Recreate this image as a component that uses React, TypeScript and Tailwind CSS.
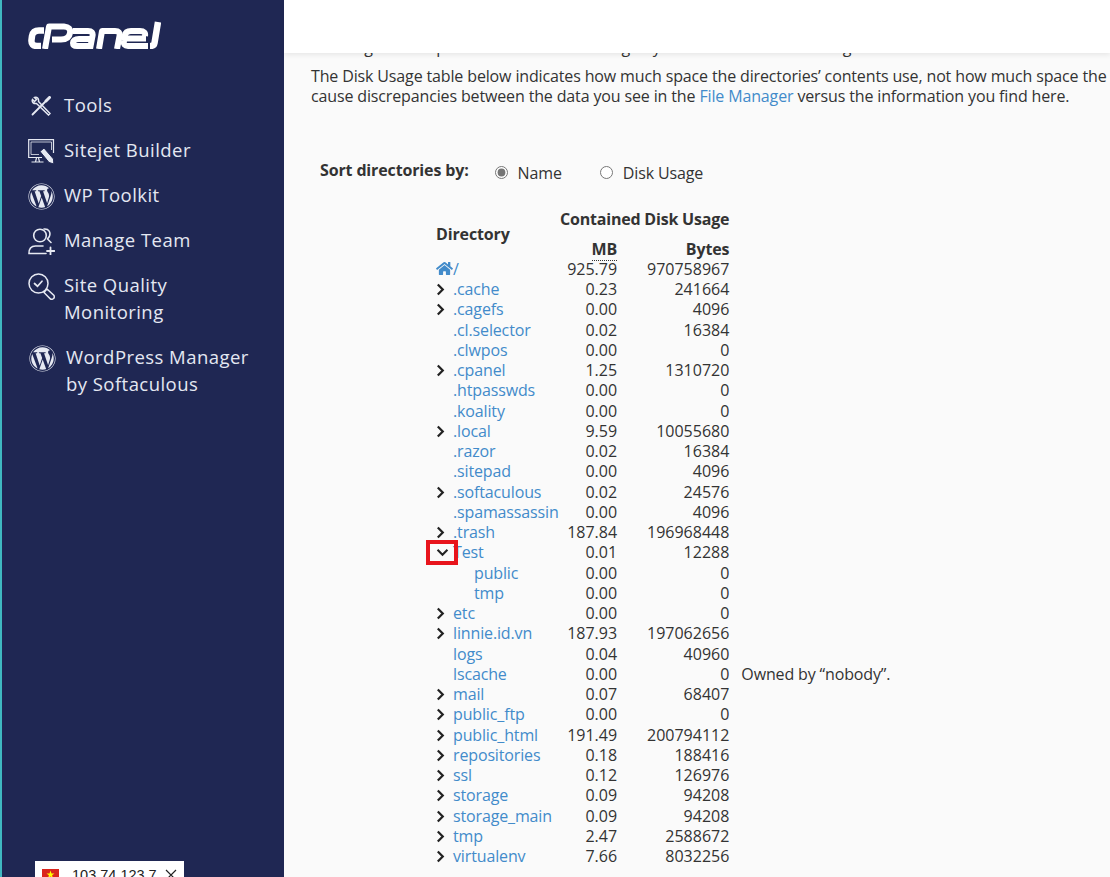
import { useState } from "react";
import { FaHome, FaWordpress } from "react-icons/fa";

const rows = [
  { name: ".cache", mb: "0.23", bytes: "241664", arrow: true },
  { name: ".cagefs", mb: "0.00", bytes: "4096", arrow: true },
  { name: ".cl.selector", mb: "0.02", bytes: "16384" },
  { name: ".clwpos", mb: "0.00", bytes: "0" },
  { name: ".cpanel", mb: "1.25", bytes: "1310720", arrow: true },
  { name: ".htpasswds", mb: "0.00", bytes: "0" },
  { name: ".koality", mb: "0.00", bytes: "0" },
  { name: ".local", mb: "9.59", bytes: "10055680", arrow: true },
  { name: ".razor", mb: "0.02", bytes: "16384" },
  { name: ".sitepad", mb: "0.00", bytes: "4096" },
  { name: ".softaculous", mb: "0.02", bytes: "24576", arrow: true },
  { name: ".spamassassin", mb: "0.00", bytes: "4096" },
  { name: ".trash", mb: "187.84", bytes: "196968448", arrow: true },
  { name: "Test", mb: "0.01", bytes: "12288", open: true },
  { name: "public", mb: "0.00", bytes: "0", child: true },
  { name: "tmp", mb: "0.00", bytes: "0", child: true },
  { name: "etc", mb: "0.00", bytes: "0", arrow: true },
  { name: "linnie.id.vn", mb: "187.93", bytes: "197062656", arrow: true },
  { name: "logs", mb: "0.04", bytes: "40960" },
  { name: "lscache", mb: "0.00", bytes: "0", note: "Owned by “nobody”." },
  { name: "mail", mb: "0.07", bytes: "68407", arrow: true },
  { name: "public_ftp", mb: "0.00", bytes: "0", arrow: true },
  { name: "public_html", mb: "191.49", bytes: "200794112", arrow: true },
  { name: "repositories", mb: "0.18", bytes: "188416", arrow: true },
  { name: "ssl", mb: "0.12", bytes: "126976", arrow: true },
  { name: "storage", mb: "0.09", bytes: "94208", arrow: true },
  { name: "storage_main", mb: "0.09", bytes: "94208", arrow: true },
  { name: "tmp", mb: "2.47", bytes: "2588672", arrow: true },
  { name: "virtualenv", mb: "7.66", bytes: "8032256", arrow: true },
];

function NavItem({ icon, children, className }: { icon: React.ReactNode; children: React.ReactNode; className?: string }) {
  return (
    <li className={"flex " + (className ?? "")}>
      <div className="w-[36px] shrink-0">{icon}</div>
      <span className="text-[18.500px] leading-[27px] tracking-[0.45px] text-[#e4e8f2]">{children}</span>
    </li>
  );
}

export default function App() {
  const [sort, setSort] = useState("name");

  return (
    <div className="flex h-[877px] w-[1110px] overflow-hidden bg-[#fafafa] font-['Open_Sans',sans-serif] text-[16px] text-[#333]">
      <aside className="relative h-full w-[284px] shrink-0 border-l-2 border-[#3fb8c0] bg-[#1f2753]">
        <div className="pl-[26px] pt-[21px]">
          {/* logo */}
          <svg viewBox="0 0 133 28" className="block h-[28px] w-[133px]" fill="none" stroke="#fff" strokeLinejoin="round">
            <path d="M16 9.500H11Q5 9.500 4 15L3.500 19Q3 25 9 25H13" strokeWidth="6.500" />
            <path d="M17 28 21 5.500H36Q43 6 42 12 41 18.500 33 18.500H24" strokeWidth="6" />
            <path d="M45 10H60Q65.500 10 64.500 15L62 28M63 18H51Q45.500 18 45 22 45 25 49 25H62" strokeWidth="6" />
            <path d="M71 28 74 10H87Q92.500 10 91.500 15L89 28" strokeWidth="6" />
            <path d="M118 17.500H99M112 10H103Q97.500 10 96.500 15L96 20Q95 25 100 25H120M112 10Q118 10 117 15" strokeWidth="6" />
            <path d="M130 1 126.500 22Q126 25 122 25" strokeWidth="6.500" />
          </svg>
        </div>

        <ul className="mt-[42px] pl-[26px]">
          <NavItem
            className="h-[45px]"
            icon={
              <svg viewBox="0 0 20 20" className="ml-[3px] mt-[5px] h-[20px] w-[20px]" fill="none" stroke="#e6e9f2" strokeWidth="1.500" strokeLinecap="round">
                <path d="M1.500 3.500 3.500 5.500 5.500 3.500 3.500 1.500C6 .5 8 2.500 7.500 5.500L19 17.500 17.500 19 5.500 7.500C2.500 8 .5 6 1.500 3.500z" fill="#1f2753" />
                <path d="M14 6 1.500 18.500" strokeWidth="1.800" />
                <path d="M15 5 18.500 1.500" strokeWidth="3" />
              </svg>
            }
          >
            Tools
          </NavItem>
          <NavItem
            className="h-[45px]"
            icon={
              <svg viewBox="0 0 27 26" className="mt-[3px] h-[26px] w-[27px]" fill="none" stroke="#e6e9f2" strokeWidth="1.200">
                <path d="M14 18.500H.7V.7H25.500V14" />
                <path d="M3 3H23.500V11M3 3V15.500H11" strokeWidth=".8" />
                <path d="M8.500 19 7.500 23H3.500H15.500H11.500L10.500 19" />
                <path d="M16 9 25.500 20 25.800 25 21 23.500 12 12.500z" fill="#e6e9f2" stroke="#1f2753" strokeWidth="1" />
              </svg>
            }
          >
            Sitejet Builder
          </NavItem>
          <NavItem className="h-[45px]" icon={<FaWordpress className="mt-[2px] h-[27px] w-[27px] text-[#e6e9f2]" />}>
            WP Toolkit
          </NavItem>
          <NavItem
            className="h-[45px]"
            icon={
              <svg viewBox="0 0 27 27" className="mt-[2px] h-[27px] w-[27px]" fill="none" stroke="#e6e9f2" strokeWidth="1.600" strokeLinecap="round">
                <circle cx="12" cy="7.500" r="6.300" />
                <path d="M16 1c5-.5 7 3.500 5.300 7.500L19.500 11l3.500 3.500" />
                <path d="M15 18H7.500C3 18 .8 21 1 25.500H18" />
                <path d="M22.500 19.500v7M19 23h7.500" strokeWidth="1.800" />
              </svg>
            }
          >
            Manage Team
          </NavItem>
          <NavItem
            className="h-[72px]"
            icon={
              <svg viewBox="0 0 27 27" className="mt-[2px] h-[27px] w-[27px]" fill="none" stroke="#e6e9f2" strokeWidth="1.500" strokeLinecap="round">
                <circle cx="10.500" cy="10.500" r="9.500" />
                <path d="M6.500 10.500 9.500 13.200 14 8.200" strokeWidth="1.700" />
                <path d="M17.500 17.500 19 16 26 22.500C27 25 25 27 22.500 26L16 19.500z" />
              </svg>
            }
          >
            Site Quality
            <br />
            Monitoring
          </NavItem>
          <li className="flex pl-[1px]">
            <div className="w-[37px] shrink-0">
              <FaWordpress className="mt-[2px] h-[27px] w-[27px] text-[#e6e9f2]" />
            </div>
            <span className="text-[18.500px] leading-[27px] tracking-[0.45px] text-[#e4e8f2]">
              WordPress Manager
              <br />
              by Softaculous
            </span>
          </li>
        </ul>

        {/* ip badge, cut by the window */}
        <div className="absolute left-[33px] top-[861px] flex h-[30px] w-[149px] items-start bg-white pl-[7px] pt-[6px] font-['Liberation_Sans',sans-serif] text-[14.500px] leading-[17px] text-[#222]">
          <svg viewBox="0 0 17 12" className="mt-[2px] h-[12px] w-[17px]">
            <rect width="17" height="12" fill="#da251d" />
            <path d="M8.500 1.500l1 3h3l-2.400 1.800.9 3-2.500-1.900L6 9.300l.9-3L4.500 4.500h3z" fill="#ff0" />
          </svg>
          <span className="ml-[13px]">103.74.123.7</span>
          <svg viewBox="0 0 12 12" className="ml-[8px] mt-[2px] h-[12px] w-[12px]" stroke="#222" strokeWidth="1.200">
            <path d="M1 1l10 10M11 1 1 11" />
          </svg>
        </div>
      </aside>

      <div className="flex min-w-0 flex-1 flex-col">
        <header className="relative z-10 h-[53px] shrink-0 bg-white shadow-[0_2px_5px_rgba(0,0,0,0.08)]" />
        <main className="min-w-0 overflow-hidden pl-[27px] tracking-[-0.14px]">
          {/* line scrolled under the header, only its descenders show */}
          <p className="mt-[-16px] whitespace-nowrap leading-[20px]">
            Tracking of disk space is also based on usage by the file owner and the log.
          </p>
          <p className="mt-[9px] w-[830px] whitespace-nowrap text-[16px] leading-[20px]">
            The Disk Usage table below indicates how much space the directories’ contents use, not how much space the directories themselves use.
            <br />
            cause discrepancies between the data you see in the <a className="text-[#428bca]">File Manager</a> versus the information you find here.
          </p>

          <div className="mt-[53px] flex items-start pl-[9px]">
            <span className="mt-[1px] font-bold leading-[20px]">Sort directories by:</span>
            <label className="ml-[26px] mt-[3px] flex items-center leading-[20px]">
              <input type="radio" name="sort" checked={sort === "name"} onChange={() => setSort("name")} className="m-0 h-[13px] w-[13px] accent-[#757575]" />
              <span className="ml-[10px] mt-[1px]">Name</span>
            </label>
            <label className="ml-[38px] mt-[3px] flex items-center leading-[20px]">
              <input type="radio" name="sort" checked={sort === "usage"} onChange={() => setSort("usage")} className="m-0 h-[13px] w-[13px] accent-[#757575]" />
              <span className="ml-[10px] mt-[1px]">Disk Usage</span>
            </label>
          </div>

          <table className="ml-[125px] mt-[20.700px] border-collapse leading-[20px]">
            <thead>
              <tr className="h-[30px]">
                <th rowSpan={2} className="w-[124px] pt-[5px] text-left align-middle font-bold">Directory</th>
                <th colSpan={2} className="whitespace-nowrap text-right align-middle font-bold tracking-[-0.2px]">Contained Disk Usage</th>
                <th />
              </tr>
              <tr className="h-[25px]">
                <th className="w-[57px] text-right align-bottom font-bold">
                  <span className="border-b border-dotted border-[#333]">MB</span>
                </th>
                <th className="w-[112px] text-right align-bottom font-bold">Bytes</th>
                <th />
              </tr>
            </thead>
            <tbody>
              <tr className="h-[20.250px]">
                <td className="p-0 text-[#428bca]">
                  <div className="flex items-center">
                    <FaHome className="h-[15px] w-[17px]" />
                    <span>/</span>
                  </div>
                </td>
                <td className="p-0 text-right tracking-normal">925.79</td>
                <td className="p-0 text-right tracking-normal">970758967</td>
                <td />
              </tr>
              {rows.map((r, i) => (
                <tr key={i} className="h-[20.250px]">
                  <td className="whitespace-nowrap p-0">
                    <div className={"relative text-[#428bca] " + (r.child ? "pl-[38px]" : "pl-[17px]")}>
                      {r.arrow && (
                        <svg viewBox="0 0 10 14" className="absolute left-0 top-[4px] h-[13px] w-[9px]" fill="none" stroke="#222" strokeWidth="2.500">
                          <path d="M2 1.500 7.500 7 2 12.500" />
                        </svg>
                      )}
                      {r.name}
                      {r.open && (
                        <div className="absolute left-[-10px] top-[-2px] flex h-[25px] w-[32px] items-center justify-center border-[4px] border-[#e8141c]">
                          <svg viewBox="0 0 14 10" className="h-[9px] w-[13px]" fill="none" stroke="#222" strokeWidth="2.300">
                            <path d="M1.500 2 7 7.500 12.500 2" />
                          </svg>
                        </div>
                      )}
                    </div>
                  </td>
                  <td className="p-0 text-right tracking-normal">{r.mb}</td>
                  <td className="p-0 text-right tracking-normal">{r.bytes}</td>
                  <td className="whitespace-nowrap p-0 pl-[12px]">{r.note}</td>
                </tr>
              ))}
            </tbody>
          </table>
        </main>
      </div>
    </div>
  );
}
